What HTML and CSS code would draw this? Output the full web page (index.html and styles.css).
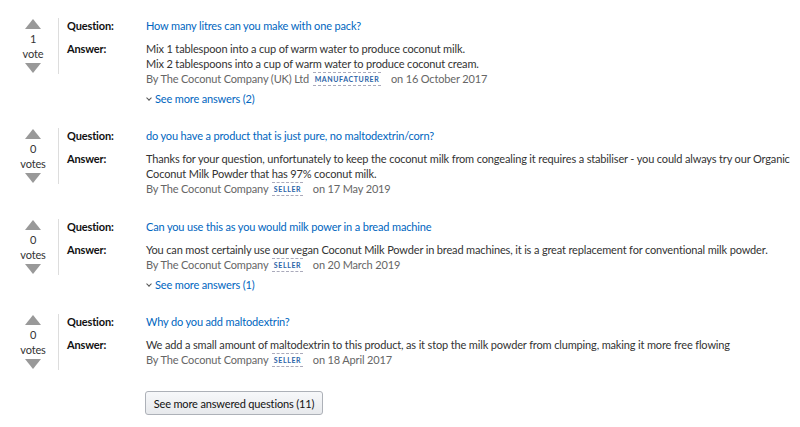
FILE: index.html
```html
<!DOCTYPE html>
<html>
<head>
<meta charset="utf-8">
<title>Customer questions &amp; answers</title>
<link rel="stylesheet" href="styles.css">
</head>

<body>

<section class="qa-list">

  <div class="qa-item">
    <div class="votes">
      <span class="arrow up"></span>
      <span class="count">1</span>
      <span class="label">vote</span>
      <span class="arrow down"></span>
    </div>
    <div class="qa-body">
      <div class="qa-row">
        <span class="qa-label">Question:</span>
        <a class="qa-question" href="#">How many litres can you make with one pack?</a>
      </div>
      <div class="qa-row">
        <span class="qa-label">Answer:</span>
        <div class="qa-answer">
          <p>Mix 1 tablespoon into a cup of warm water to produce coconut milk.<br>
          Mix 2 tablespoons into a cup of warm water to produce coconut cream.</p>
          <p class="byline">By The Coconut Company (UK) Ltd <span class="badge">MANUFACTURER</span> on 16 October 2017</p>
          <a class="see-more" href="#"><span class="chev"></span>See more answers (2)</a>
        </div>
      </div>
    </div>
  </div>

  <div class="qa-item">
    <div class="votes">
      <span class="arrow up"></span>
      <span class="count">0</span>
      <span class="label">votes</span>
      <span class="arrow down"></span>
    </div>
    <div class="qa-body">
      <div class="qa-row">
        <span class="qa-label">Question:</span>
        <a class="qa-question" href="#">do you have a product that is just pure, no maltodextrin/corn?</a>
      </div>
      <div class="qa-row">
        <span class="qa-label">Answer:</span>
        <div class="qa-answer">
          <p>Thanks for your question, unfortunately to keep the coconut milk from congealing it requires a stabiliser - you could always try our Organic Coconut Milk Powder that has 97% coconut milk.</p>
          <p class="byline">By The Coconut Company <span class="badge">SELLER</span> on 17 May 2019</p>
        </div>
      </div>
    </div>
  </div>

  <div class="qa-item">
    <div class="votes">
      <span class="arrow up"></span>
      <span class="count">0</span>
      <span class="label">votes</span>
      <span class="arrow down"></span>
    </div>
    <div class="qa-body">
      <div class="qa-row">
        <span class="qa-label">Question:</span>
        <a class="qa-question" href="#">Can you use this as you would milk power in a bread machine</a>
      </div>
      <div class="qa-row">
        <span class="qa-label">Answer:</span>
        <div class="qa-answer">
          <p>You can most certainly use our vegan Coconut Milk Powder in bread machines, it is a great replacement for conventional milk powder.</p>
          <p class="byline">By The Coconut Company <span class="badge">SELLER</span> on 20 March 2019</p>
          <a class="see-more" href="#"><span class="chev"></span>See more answers (1)</a>
        </div>
      </div>
    </div>
  </div>

  <div class="qa-item">
    <div class="votes">
      <span class="arrow up"></span>
      <span class="count">0</span>
      <span class="label">votes</span>
      <span class="arrow down"></span>
    </div>
    <div class="qa-body">
      <div class="qa-row">
        <span class="qa-label">Question:</span>
        <a class="qa-question" href="#">Why do you add maltodextrin?</a>
      </div>
      <div class="qa-row">
        <span class="qa-label">Answer:</span>
        <div class="qa-answer">
          <p>We add a small amount of maltodextrin to this product, as it stop the milk powder from clumping, making it more free flowing</p>
          <p class="byline">By The Coconut Company <span class="badge">SELLER</span> on 18 April 2017</p>
        </div>
      </div>
    </div>
  </div>

  <div class="more-bar">
    <button type="button">See more answered questions (11)</button>
  </div>

</section>

</body>
</html>
```

FILE: styles.css
```css
body {
  background-color: #fff;
  color: #333;
  font-family: Lato, 'Open Sans', arial, sans-serif;
  font-size: 11px;
  letter-spacing: -0.15px;
  line-height: 15px;
  margin: 0;
  padding: 0;
}

p {
  margin: 0;
  padding: 0;
}

a {
  color: #0066c0;
  text-decoration: none;
}


/* List of questions */
.qa-list {
  padding: 18px 0 0 8px;
}

.qa-item {
  display: flex;
  align-items: flex-start;
  margin-bottom: 23px;
}

.votes {
  border-right: 1px solid #ddd;
  display: flex;
  flex-direction: column;
  align-items: center;
  width: 50px;
  padding: 1px 0;
}
.votes .count,
.votes .label {
  color: #333;
  line-height: 15px;
}
.votes .count {
  margin-top: 2px;
}
.arrow {
  border-left: 8px solid transparent;
  border-right: 8px solid transparent;
  height: 0;
  width: 0;
}
.arrow.up {
  border-bottom: 10px solid #999;
}
.arrow.down {
  border-top: 10px solid #999;
  margin-top: 2px;
}

.qa-body {
  flex: 1;
  padding-left: 8px;
}

.qa-row {
  display: flex;
  margin-bottom: 8px;
}
.qa-row:last-child {
  margin-bottom: 0;
}

.qa-label {
  color: #111;
  flex: none;
  font-weight: bold;
  width: 79px;
}

.qa-answer {
  flex: 1;
}

.byline {
  color: #666;
}

.badge {
  border-bottom: 1px dashed #aab;
  border-top: 1px dashed #aab;
  color: #2a63a8;
  display: inline-block;
  font-size: 7px;
  font-weight: bold;
  letter-spacing: 0.6px;
  line-height: 12px;
  margin: 0 7px 0 1px;
  padding: 0 2px;
  vertical-align: 1px;
}

.see-more {
  display: block;
  line-height: 13px;
  margin-top: 6px;
}
.chev {
  border-bottom: 1px solid #555;
  border-right: 1px solid #555;
  display: inline-block;
  height: 3px;
  margin: 0 4px 3px 1px;
  transform: rotate(45deg);
  width: 3px;
}

.more-bar {
  margin-top: -2px;
  padding-left: 137px;
}
.more-bar button {
  background: linear-gradient(#f7f8fa, #e7e9ec);
  border: 1px solid #adb1b8;
  border-radius: 3px;
  color: #111;
  font-family: inherit;
  font-size: 11px;
  height: 24px;
  letter-spacing: inherit;
  padding: 0;
  white-space: nowrap;
  width: 178px;
}
```
